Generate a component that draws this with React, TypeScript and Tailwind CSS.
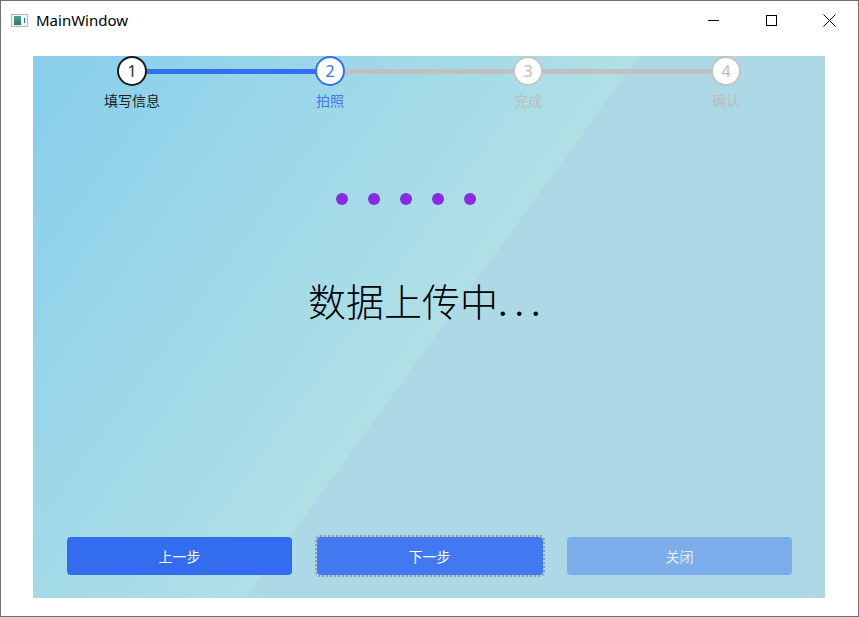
import React from "react";

const steps = [
  { n: 1, label: "填写信息", state: "done" },
  { n: 2, label: "拍照", state: "active" },
  { n: 3, label: "完成", state: "todo" },
  { n: 4, label: "确认", state: "todo" },
];

function Stepper() {
  return (
    <div className="relative grid grid-cols-4">
      {/* connector lines between circle centers */}
      <div className="absolute left-[99px] top-[13px] h-[5px] w-[198px] bg-[#3370f0]" />
      <div className="absolute left-[297px] top-[13px] h-[5px] w-[396px] bg-[#c0c0c0]" />
      {steps.map((s) => {
        const circle =
          s.state === "done"
            ? "border-[#1c1c1c] text-[#3a2c22]"
            : s.state === "active"
              ? "border-[#3370f0] text-[#3370f0]"
              : "border-[#c4c4c4] text-[#bdbdbd]";
        const label =
          s.state === "done"
            ? "text-[#222]"
            : s.state === "active"
              ? "text-[#3d78ee]"
              : "text-[#bdbdbd]";
        return (
          <div key={s.n} className="relative z-10 flex flex-col items-center">
            <div
              className={`flex h-[30px] w-[30px] items-center justify-center rounded-full border-2 bg-white text-[16px] leading-none ${circle}`}
            >
              {s.n}
            </div>
            <div className={`mt-[6px] text-[14px] leading-[18px] ${label}`}>{s.label}</div>
          </div>
        );
      })}
    </div>
  );
}

export default function App() {
  return (
    <div
      className="flex h-[617px] w-[859px] flex-col border border-[#707070] bg-white"
      style={{ fontFamily: '"Noto Sans", "Noto Sans CJK SC", sans-serif' }}
    >
      {/* title bar */}
      <div className="flex h-[38px] shrink-0 items-center">
        <div className="ml-[10px] flex h-[13px] w-[17px] items-center gap-[1px] border border-[#b8b8b8] bg-[#f2f2f2] px-[2px]">
          <div className="h-[9px] w-[8px] bg-gradient-to-b from-[#5a9a9a] to-[#2e7a5a]" />
          <div className="ml-[2px] h-[5px] w-[1px] bg-[#2e7a6a]" />
        </div>
        <span className="ml-[8px] text-[15px] text-black">MainWindow</span>
        <div className="ml-auto flex h-full">
          <div className="flex w-[58px] items-center justify-center">
            <div className="h-px w-[11px] bg-black" />
          </div>
          <div className="flex w-[58px] items-center justify-center">
            <div className="h-[11px] w-[11px] border border-black" />
          </div>
          <div className="flex w-[58px] items-center justify-center">
            <svg width="13" height="13" viewBox="0 0 13 13">
              <path d="M0.5 0.5 L12.5 12.5 M12.5 0.5 L0.5 12.5" stroke="black" strokeWidth="1" />
            </svg>
          </div>
        </div>
      </div>

      {/* client area */}
      <div className="flex flex-1 px-[32px] pt-[17px] pb-[17px]">
        <div className="flex h-[542px] w-[792px] flex-col bg-[linear-gradient(126deg,#87ceeb_0%,#b0e0e6_51.1%,#add8e6_51.1%,#add8e6_100%)]">
          <Stepper />

          <div className="mt-[83px] ml-[303px] flex gap-[20px]">
            {[0, 1, 2, 3, 4].map((i) => (
              <div key={i} className="h-[12px] w-[12px] rounded-full bg-[#8a2be2]" />
            ))}
          </div>

          <div
            className="mt-[76px] ml-[275px] flex text-[38px] leading-[44px] text-black"
            style={{ fontFamily: '"Liberation Serif", "Noto Sans CJK SC", serif' }}
          >
            <span className="font-light">数据上传中</span>
            <span className="tracking-[7px]">...</span>
          </div>

          <div className="mt-auto mb-[23px] flex justify-between pl-[34px] pr-[33px]">
            <button className="h-[38px] w-[225px] rounded-[4px] bg-[#346cf0] text-[14px] text-white">
              上一步
            </button>
            <div className="-my-[2px] rounded-[5px] border-2 border-dotted border-[#8e9aa6] p-0">
              <button className="block h-[38px] w-[226px] rounded-[4px] bg-[#4279f1] text-[14px] text-white">
                下一步
              </button>
            </div>
            <button className="h-[38px] w-[225px] rounded-[4px] bg-[#7badea] text-[14px] text-[#e4ecf7]">
              关闭
            </button>
          </div>
        </div>
      </div>
    </div>
  );
}
